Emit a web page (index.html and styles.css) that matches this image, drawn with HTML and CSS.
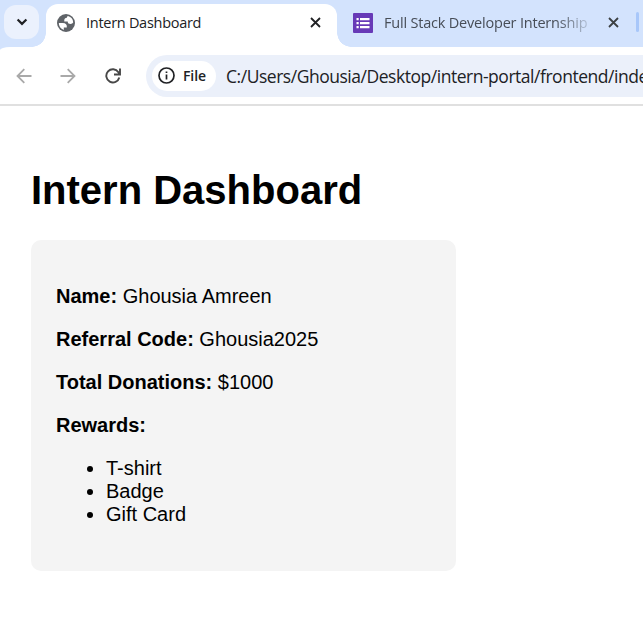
FILE: index.html
```html
<!DOCTYPE html>
<html lang="en">
<head>
<meta charset="utf-8">
<title>Intern Dashboard</title>
<link rel="stylesheet" href="styles.css">
</head>
<body>
<header class="browser">
  <div class="tabs">
    <div class="tab-search">
      <svg width="12" height="8" viewBox="0 0 12 8"><path d="M1.6 1.5 6 5.9l4.4-4.4" fill="none" stroke="#202124" stroke-width="2.2"/></svg>
    </div>
    <div class="tab active">
      <svg class="favicon" width="18" height="18" viewBox="0 0 18 18"><circle cx="9" cy="9" r="9" fill="#5f6368"/><path fill="#fff" d="M1.800 9h4c3 0 4.400 1.500 4 4.600H6.800v2.300A7.300 7.300 0 0 1 1.800 9zM11 2.100a7.200 7.200 0 0 1 5.200 6.400c-.6.900-1.400 1.400-2.600 1.400-1.900 0-2.900-.8-2.900-2.500H7.300C7 5 7.900 3.800 9.900 3.800c0-.9.400-1.400 1.100-1.700z"/></svg>
      <span class="tab-title">Intern Dashboard</span>
      <svg class="close" width="11" height="11" viewBox="0 0 11 11"><path d="m1 1 9 9M10 1l-9 9" stroke="#202124" stroke-width="1.8"/></svg>
    </div>
    <div class="tab second">
      <svg class="forms" width="20" height="20" viewBox="0 0 20 20"><rect width="20" height="20" rx="1" fill="#673ab7"/><path fill="#fff" d="M3.500 5h2.200v2.200H3.500zM7 5h9.500v2.200H7zM3.500 9h2.200v2.200H3.500zM7 9h9.500v2.200H7zM3.500 13h2.200v2.200H3.500zM7 13h9.500v2.200H7z"/></svg>
      <span class="tab-title faded">Full Stack Developer Internship -</span>
      <svg class="close" width="11" height="11" viewBox="0 0 11 11"><path d="m1 1 9 9M10 1l-9 9" stroke="#3c4043" stroke-width="1.8"/></svg>
    </div>
    <span class="tab-divider"></span>
  </div>
  <div class="toolbar">
    <svg class="nav back" width="16" height="16" viewBox="0 0 16 16"><path d="M15.500 8H2M8.300 1.200 1.500 8l6.800 6.800" fill="none" stroke="#a9a9a9" stroke-width="1.800"/></svg>
    <svg class="nav forward" width="16" height="16" viewBox="0 0 16 16"><path d="M.5 8H14M7.700 1.200 14.500 8l-6.800 6.800" fill="none" stroke="#a9a9a9" stroke-width="1.800"/></svg>
    <svg class="nav reload" width="16" height="16" viewBox="0 0 16 16"><path d="M14.300 9.500A6.600 6.600 0 1 1 13.400 4.200L14.500 6M15 .5v6H9" fill="none" stroke="#474747" stroke-width="1.900"/></svg>
    <div class="omnibox">
      <span class="chip">
        <svg width="17" height="17" viewBox="0 0 17 17"><circle cx="8.500" cy="8.500" r="7.500" fill="none" stroke="#202124" stroke-width="1.700"/><path d="M8.500 7.500v5M8.500 4.400v1.700" stroke="#202124" stroke-width="1.700"/></svg>
        <span class="chip-label">File</span>
      </span>
      <span class="url">C:/Users/Ghousia/Desktop/intern-portal/frontend/inde</span>
    </div>
  </div>
</header>
<main class="page">
  <h1>Intern Dashboard</h1>
  <section class="card">
    <p><strong>Name:</strong> Ghousia Amreen</p>
    <p><strong>Referral Code:</strong> Ghousia2025</p>
    <p><strong>Total Donations:</strong> $1000</p>
    <p><strong>Rewards:</strong></p>
    <ul>
      <li>T-shirt</li>
      <li>Badge</li>
      <li>Gift Card</li>
    </ul>
  </section>
</main>
</body>
</html>
```
FILE: styles.css
```css
* { box-sizing: border-box; }
body { margin: 0; width: 643px; height: 631px; overflow: hidden; background: #fff; color: #000; font: 20px/23px "Liberation Sans", Arial, sans-serif; }
svg { display: block; flex: none; }
.browser { height: 106px; overflow: hidden; background: #d3e3fd; border-bottom: 2px solid #e0e0e0; font-family: "Open Sans", "Noto Sans", sans-serif; white-space: nowrap; }
.tabs { display: flex; height: 47px; padding-left: 4px; }
.tab-search { display: flex; align-items: center; justify-content: center; flex: none; width: 35px; height: 34px; margin: 5px 7px 0 0; border-radius: 12px; background: #ebf1fd; }
.tab { position: relative; display: flex; align-items: center; flex: none; height: 43px; margin-top: 4px; padding-bottom: 6px; }
.active { width: 291px; padding-left: 11px; border-radius: 12px 12px 0 0; background: #fff; }
.active::before, .active::after { content: ""; position: absolute; bottom: 0; width: 14px; height: 14px; }
.active::before { left: -14px; background: radial-gradient(circle at 0 0, transparent 13.5px, #fff 14px); }
.active::after { right: -14px; background: radial-gradient(circle at 100% 0, transparent 13.5px, #fff 14px); }
.tab-title { width: 204px; margin-left: 11px; color: #202124; font-size: 14.5px; line-height: 24px; letter-spacing: -0.28px; }
.active .tab-title { width: 224px; }
.second { width: 299px; padding-left: 16px; }
.second .close { margin-left: 20px; }
.faded { letter-spacing: -0.2px; color: #474d57; -webkit-mask-image: linear-gradient(90deg, #000 84%, transparent 104%); mask-image: linear-gradient(90deg, #000 84%, transparent 104%); }
.tab-divider { flex: none; width: 3px; height: 20px; margin-top: 12px; border-radius: 2px; background: #a8c7fa; }
.toolbar { display: flex; align-items: center; height: 57px; padding-left: 16px; border-top-left-radius: 10px 3px; background: #fff; }
.forward { margin-left: 28px; }
.reload { margin-left: 29px; }
.omnibox { display: flex; align-items: center; flex: none; width: 520px; height: 42px; margin-left: 25px; padding-left: 6px; border-radius: 21px; background: #ebf0fa; }
.chip { display: flex; align-items: center; flex: none; width: 64px; height: 30px; padding-left: 6px; border-radius: 15px; background: #fff; }
.chip-label { margin-left: 8px; color: #202124; font-size: 14px; font-weight: 600; letter-spacing: -0.1px; }
.url { margin: 2px 0 0 10px; color: #202124; font-size: 17.5px; letter-spacing: -0.47px; }
.page { padding: 61px 31px 0; }
h1 { margin: 0 0 27px; font-size: 40px; line-height: 46px; }
.card { width: 425px; height: 331px; padding: 25px; border-radius: 10px; background: #f4f4f4; }
p { margin: 20px 0; }
ul { margin: 20px 0; padding-left: 50px; }
```
